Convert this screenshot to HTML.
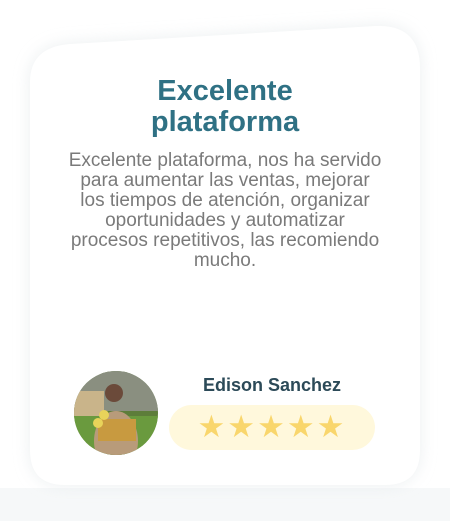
<!DOCTYPE html>
<html><head><style>
body{margin:0;width:450px;height:521px;background:#fff;position:relative;overflow:hidden;font-family:"Liberation Sans",sans-serif}
svg.bg{position:absolute;left:0;top:0}
.t{position:absolute;left:0;width:450px;text-align:center;color:#2f7184;font-weight:bold;font-size:29px;line-height:31px;top:76px}
.p{position:absolute;left:0;width:450px;text-align:center;color:#7a7a7a;font-size:19px;line-height:20px;top:151px;white-space:nowrap}
.av{position:absolute;left:74px;top:371px;width:84px;height:84px;border-radius:50%;overflow:hidden;background:#5d7d3a}
.n{position:absolute;left:172px;width:200px;text-align:center;top:375px;font-weight:bold;font-size:18px;color:#2c4a58}
.pill{position:absolute;left:169px;top:405px;width:206px;height:45px;border-radius:23px;background:#fff8dc;text-align:center;color:#f9d66c;font-size:31px;line-height:44px;letter-spacing:2px}
</style></head><body>
<svg class="bg" width="450" height="521">
<defs><filter id="f" x="-20%" y="-20%" width="140%" height="140%"><feGaussianBlur stdDeviation="8"/></filter></defs>
<rect x="0" y="488" width="450" height="33" fill="#f6f8f9"/>
<path d="M30 82 Q30 47 70 44 L375 26 Q420 24 420 68 L420 450 Q420 485 385 485 L65 485 Q30 485 30 450 Z" fill="#e3e8ea" filter="url(#f)" opacity="0.7"/>
<path d="M30 82 Q30 47 70 44 L375 26 Q420 24 420 68 L420 450 Q420 485 385 485 L65 485 Q30 485 30 450 Z" fill="#fff"/>
</svg>
<div class="t">Excelente<br>plataforma</div>
<div class="p">Excelente plataforma, nos ha servido<br>para aumentar las ventas, mejorar<br>los tiempos de atención, organizar<br>oportunidades y automatizar<br>procesos repetitivos, las recomiendo<br>mucho.</div>
<div class="av">
<svg width="84" height="84"><rect width="84" height="40" fill="#8a8f80"/><rect y="20" width="30" height="25" fill="#c9b48a"/><rect y="45" width="84" height="39" fill="#6a9a3e"/><ellipse cx="42" cy="70" rx="22" ry="30" fill="#b89b7a"/><circle cx="40" cy="22" r="9" fill="#6b4a3a"/><rect x="24" y="48" width="38" height="22" fill="#c89a40"/><circle cx="30" cy="44" r="5" fill="#e8d35a"/><circle cx="24" cy="52" r="5" fill="#e8d35a"/></svg>
</div>
<div class="n">Edison Sanchez</div>
<div class="pill">★★★★★</div>
</body></html>
